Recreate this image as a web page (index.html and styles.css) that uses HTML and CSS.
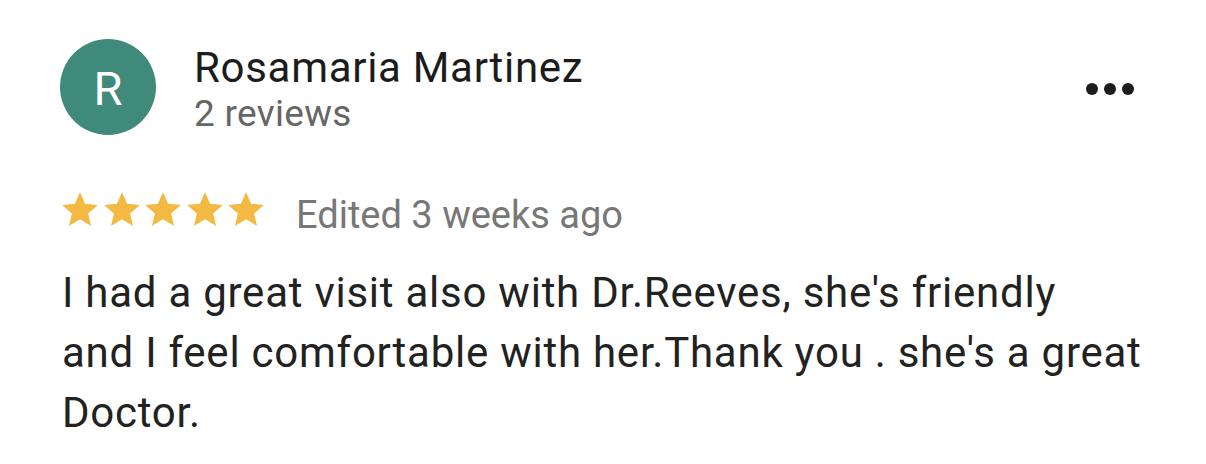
FILE: index.html
```html
<!DOCTYPE html>
<html>
<head>
<title>Review</title>
<meta charset="UTF-8">
<meta name="viewport" content="width=device-width, initial-scale=1.0">
<link rel="stylesheet" href="styles.css">
</head>
<body>
<div class="review">
  <div class="review-header">
    <div class="avatar">R</div>
    <div class="author">
      <div class="author-name">Rosamaria Martinez</div>
      <div class="author-meta">2 reviews</div>
    </div>
    <div class="more">
      <span></span><span></span><span></span>
    </div>
  </div>
  <div class="rating-row">
    <div class="stars">
      <svg viewBox="2 2 20 19"><path d="M12 17.27L18.18 21l-1.64-7.03L22 9.24l-7.19-.61L12 2 9.19 8.63 2 9.24l5.46 4.73L5.82 21z"/></svg>
      <svg viewBox="2 2 20 19"><path d="M12 17.27L18.18 21l-1.64-7.03L22 9.24l-7.19-.61L12 2 9.19 8.63 2 9.24l5.46 4.73L5.82 21z"/></svg>
      <svg viewBox="2 2 20 19"><path d="M12 17.27L18.18 21l-1.64-7.03L22 9.24l-7.19-.61L12 2 9.19 8.63 2 9.24l5.46 4.73L5.82 21z"/></svg>
      <svg viewBox="2 2 20 19"><path d="M12 17.27L18.18 21l-1.64-7.03L22 9.24l-7.19-.61L12 2 9.19 8.63 2 9.24l5.46 4.73L5.82 21z"/></svg>
      <svg viewBox="2 2 20 19"><path d="M12 17.27L18.18 21l-1.64-7.03L22 9.24l-7.19-.61L12 2 9.19 8.63 2 9.24l5.46 4.73L5.82 21z"/></svg>
    </div>
    <span class="edited">Edited 3 weeks ago</span>
  </div>
  <p class="review-text">I had a great visit also with Dr.Reeves, she's friendly<br>and I feel comfortable with her.Thank you . she's a great<br>Doctor.</p>
</div>
</body>
</html>
```

FILE: styles.css
```css
body {
  margin: 0;
  background-color: #fff;
  font-family: Roboto, "Noto Sans", sans-serif;
  color: #222;
}
.review {
  width: 1086px;
  padding: 39px 0 0 60px;
}
.review-header {
  display: flex;
  align-items: flex-start;
}
.avatar {
  width: 96px;
  height: 96px;
  border-radius: 50%;
  background-color: #3f8a7a;
  color: #fff;
  font-size: 47px;
  line-height: 100px;
  text-align: center;
}
.author {
  margin-left: 38px;
  padding-top: 5px;
}
.author-name {
  font-size: 42px;
  line-height: 48px;
  letter-spacing: 0.7px;
  color: #1c1c1c;
}
.author-meta {
  font-size: 37px;
  line-height: 44px;
  letter-spacing: 0.3px;
  color: #666;
}
.more {
  display: flex;
  gap: 6px;
  margin-left: auto;
  margin-right: 12px;
  margin-top: 44px;
}
.more span {
  width: 12px;
  height: 12px;
  border-radius: 50%;
  background-color: #1c1c1c;
}
.rating-row {
  display: flex;
  align-items: flex-start;
  margin-top: 57px;
}
.stars {
  display: flex;
  gap: 5.5px;
  margin: -1px 0 0 2px;
}
.stars svg {
  width: 36px;
  height: 34px;
  fill: #f4b942;
}
.edited {
  margin-left: 32px;
  font-size: 38px;
  line-height: 44px;
  color: #777;
}
.review-text {
  margin: 26px 0 0 2px;
  font-size: 42px;
  line-height: 60px;
  letter-spacing: 0.75px;
  color: #222;
  white-space: nowrap;
}
```
